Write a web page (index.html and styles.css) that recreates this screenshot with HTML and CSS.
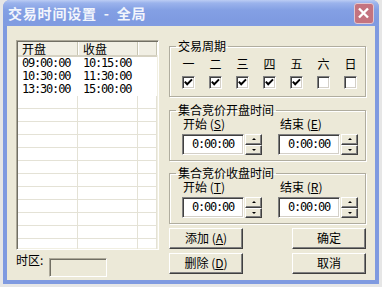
FILE: index.html
```
<!DOCTYPE html>
<html lang="zh-CN">
<head>
    <meta charset="UTF-8">
    <title>交易时间设置</title>
    <link rel="stylesheet" href="styles.css">
</head>
<body>
<div class="window">
    <div class="titlebar">
        <span class="title">交易时间设置 - 全局</span>
        <span class="close">
            <svg width="18" height="19" viewBox="0 0 18 19"><path d="M4 4.5 L13 13.5 M13 4.5 L4 13.5" stroke="#fff" stroke-width="2.4" fill="none"/></svg>
        </span>
    </div>
    <div class="client">
        <div class="left">
            <div class="list">
                <div class="list-head">
                    <span class="c1">开盘</span><span class="c2">收盘</span><span class="c3"></span>
                </div>
                <div class="row data"><span class="c1">09:00:00</span><span class="c2">10:15:00</span><span class="c3"></span></div>
                <div class="row data"><span class="c1">10:30:00</span><span class="c2">11:30:00</span><span class="c3"></span></div>
                <div class="row data"><span class="c1">13:30:00</span><span class="c2">15:00:00</span><span class="c3"></span></div>
                <div class="row"><span class="c1"></span><span class="c2"></span><span class="c3"></span></div>
                <div class="row"><span class="c1"></span><span class="c2"></span><span class="c3"></span></div>
                <div class="row"><span class="c1"></span><span class="c2"></span><span class="c3"></span></div>
                <div class="row"><span class="c1"></span><span class="c2"></span><span class="c3"></span></div>
                <div class="row"><span class="c1"></span><span class="c2"></span><span class="c3"></span></div>
                <div class="row"><span class="c1"></span><span class="c2"></span><span class="c3"></span></div>
                <div class="row"><span class="c1"></span><span class="c2"></span><span class="c3"></span></div>
                <div class="row"><span class="c1"></span><span class="c2"></span><span class="c3"></span></div>
                <div class="row"><span class="c1"></span><span class="c2"></span><span class="c3"></span></div>
                <div class="row"><span class="c1"></span><span class="c2"></span><span class="c3"></span></div>
                <div class="row"><span class="c1"></span><span class="c2"></span><span class="c3"></span></div>
                <div class="row"><span class="c1"></span><span class="c2"></span><span class="c3"></span></div>
            </div>
            <div class="tz">
                <span class="tz-label">时区:</span>
                <span class="tz-box"></span>
            </div>
        </div>

        <div class="right">
            <fieldset class="group week">
                <legend>交易周期</legend>
                <div class="days">
                    <span>一</span><span>二</span><span>三</span><span>四</span><span>五</span><span>六</span><span>日</span>
                    <span class="chk"><svg width="11" height="11" viewBox="0 0 11 11"><path d="M1.8 4.6 L4.2 7.2 L9 2.4" stroke="#000" stroke-width="2" fill="none"/></svg></span>
                    <span class="chk"><svg width="11" height="11" viewBox="0 0 11 11"><path d="M1.8 4.6 L4.2 7.2 L9 2.4" stroke="#000" stroke-width="2" fill="none"/></svg></span>
                    <span class="chk"><svg width="11" height="11" viewBox="0 0 11 11"><path d="M1.8 4.6 L4.2 7.2 L9 2.4" stroke="#000" stroke-width="2" fill="none"/></svg></span>
                    <span class="chk"><svg width="11" height="11" viewBox="0 0 11 11"><path d="M1.8 4.6 L4.2 7.2 L9 2.4" stroke="#000" stroke-width="2" fill="none"/></svg></span>
                    <span class="chk"><svg width="11" height="11" viewBox="0 0 11 11"><path d="M1.8 4.6 L4.2 7.2 L9 2.4" stroke="#000" stroke-width="2" fill="none"/></svg></span>
                    <span class="chk"></span>
                    <span class="chk"></span>
                </div>
            </fieldset>

            <fieldset class="group open">
                <legend>集合竞价开盘时间</legend>
                <div class="spins">
                    <div class="field">
                        <div class="lbl">开始 (<u>S</u>)</div>
                        <div class="spin"><span class="edit">0:00:00</span><span class="arrows"><i class="up"></i><i class="down"></i></span></div>
                    </div>
                    <div class="field">
                        <div class="lbl">结束 (<u>E</u>)</div>
                        <div class="spin"><span class="edit">0:00:00</span><span class="arrows"><i class="up"></i><i class="down"></i></span></div>
                    </div>
                </div>
            </fieldset>

            <fieldset class="group close-time">
                <legend>集合竞价收盘时间</legend>
                <div class="spins">
                    <div class="field">
                        <div class="lbl">开始 (<u>T</u>)</div>
                        <div class="spin"><span class="edit">0:00:00</span><span class="arrows"><i class="up"></i><i class="down"></i></span></div>
                    </div>
                    <div class="field">
                        <div class="lbl">结束 (<u>R</u>)</div>
                        <div class="spin"><span class="edit">0:00:00</span><span class="arrows"><i class="up"></i><i class="down"></i></span></div>
                    </div>
                </div>
            </fieldset>

            <div class="btns">
                <span class="btn">添加 (<u>A</u>)</span>
                <span class="btn">确定</span>
                <span class="btn">删除 (<u>D</u>)</span>
                <span class="btn">取消</span>
            </div>
        </div>
    </div>
</div>
</body>
</html>
```

FILE: styles.css
```
body {
    margin: 0;
    background: #e6e6e6;
    font-family: "Noto Sans CJK SC", "Liberation Sans", sans-serif;
    font-size: 12px;
    color: #000;
}

/* window frame (inactive XP look) */
.window {
    margin-left: 3px;
    width: 376px;
    height: 284px;
    display: flex;
    flex-direction: column;
    background: #7f9ae0;
    border-radius: 7px 7px 0 0;
}

.titlebar {
    height: 26px;
    flex: none;
    display: flex;
    align-items: center;
    justify-content: space-between;
    padding: 0 5px;
    border-radius: 7px 7px 0 0;
    background: linear-gradient(#bccdf4 0, #9bb3ec 3px, #84a0e4 10px, #7f9be1 20px, #819ce1 26px);
}

.title {
    color: #f2f5fc;
    font-size: 14px;
    font-weight: bold;
    letter-spacing: 0.8px;
    word-spacing: 3px;
}

.close {
    width: 18px;
    height: 19px;
    border: 1px solid #e2c7d0;
    border-radius: 3px;
    background: #c4737f;
}

.close svg {
    display: block;
}

.client {
    flex: 1;
    margin: 0 4px 4px;
    background: #ece9d8;
    display: flex;
    gap: 10px;
    padding: 14px 9px 0;
}

/* list view */
.left {
    width: 143px;
}

.list {
    height: 210px;
    box-sizing: border-box;
    border: 1px solid;
    border-color: #aca899 #fff #fff #aca899;
    box-shadow: inset 1px 1px #716f64, inset -1px -1px #f1efe2;
    padding: 1px;
    background: #fff;
    overflow: hidden;
}

.list-head {
    display: flex;
    height: 15px;
    box-sizing: border-box;
    background: #f1efe4;
    border-bottom: 2px solid #d6d2c2;
    line-height: 13px;
}

.list-head span {
    border-right: 1px solid #c7c5b2;
    box-shadow: 1px 0 #fff;
    box-sizing: border-box;
}

.c1 {
    width: 60px;
    padding-left: 4px;
    box-sizing: border-box;
}

.c2 {
    width: 60px;
    padding-left: 5px;
    box-sizing: border-box;
}

.c3 {
    flex: 1;
}

.row {
    display: flex;
    height: 13px;
    box-sizing: border-box;
    border-bottom: 1px solid #e4e2d6;
}

.row span {
    border-right: 1px solid #e4e2d6;
}

.row.data {
    border-bottom: 0;
    font-family: "DejaVu Sans Mono", monospace;
    font-size: 12px;
    letter-spacing: -1.2px;
    line-height: 13px;
}

.row.data span {
    border-right: 0;
}

.tz {
    display: flex;
    align-items: flex-start;
    margin-top: 8px;
}

.tz-label {
    width: 33px;
    line-height: 14px;
    margin-top: -5px;
}

.tz-box {
    width: 58px;
    height: 19px;
    box-sizing: border-box;
    border: 1px solid;
    border-color: #aca899 #fff #fff #aca899;
    box-shadow: inset 1px 1px #716f64;
    background: #ece9d8;
}

/* right side */
.right {
    width: 197px;
    display: flex;
    flex-direction: column;
}

.group {
    margin: 0;
    padding: 0;
    min-width: 0;
    border: 1px solid #b0ad9f;
    box-shadow: inset 1px 1px #fff, 1px 1px #fff;
}

.group legend {
    margin-left: 6px;
    padding: 0 2px;
    line-height: 12px;
}

.days {
    display: grid;
    grid-template-columns: repeat(7, 13px);
    column-gap: 14px;
    row-gap: 5px;
    padding: 5px 0 7px 12px;
    line-height: 14px;
    text-align: center;
}

.chk {
    width: 13px;
    height: 13px;
    box-sizing: border-box;
    border: 1px solid;
    border-color: #808080 #fff #fff #808080;
    box-shadow: inset 1px 1px #404040, inset -1px -1px #d4d0c8;
    background: #fff;
}

.chk svg {
    display: block;
}

.open {
    margin-top: 7px;
}

.close-time {
    margin-top: 6px;
}

.spins {
    display: grid;
    grid-template-columns: 96px 80px;
    padding: 2px 0 5px 12px;
}

.lbl {
    line-height: 12px;
    margin-bottom: 4px;
    padding-left: 1px;
}

.field + .field .lbl {
    padding-left: 2px;
}

.spin {
    display: flex;
    gap: 1px;
}

.edit {
    width: 62px;
    height: 21px;
    box-sizing: border-box;
    border: 1px solid;
    border-color: #808080 #fff #fff #808080;
    box-shadow: inset 1px 1px #404040, inset -1px -1px #d4d0c8;
    background: #fff;
    font-family: "DejaVu Sans Mono", monospace;
    letter-spacing: -1.2px;
    line-height: 19px;
    text-align: center;
}

.arrows {
    width: 17px;
    display: flex;
    flex-direction: column;
}

.arrows i {
    flex: 1;
    box-sizing: border-box;
    border: 1px solid;
    border-color: #fff #404040 #404040 #fff;
    box-shadow: inset -1px -1px #808080;
    background: #ece9d8;
    display: flex;
    align-items: center;
    justify-content: center;
}

.arrows i::after {
    content: "";
    border-left: 2px solid transparent;
    border-right: 2px solid transparent;
}

.arrows .up::after {
    border-bottom: 2px solid #000;
}

.arrows .down::after {
    border-top: 2px solid #000;
}

.btns {
    display: grid;
    grid-template-columns: 74px 74px;
    justify-content: space-between;
    row-gap: 4px;
    margin-top: 4px;
}

.btn {
    height: 21px;
    box-sizing: border-box;
    border: 1px solid;
    border-color: #fff #404040 #404040 #fff;
    box-shadow: inset -1px -1px #808080;
    background: #ece9d8;
    text-align: center;
    line-height: 18px;
}
```
